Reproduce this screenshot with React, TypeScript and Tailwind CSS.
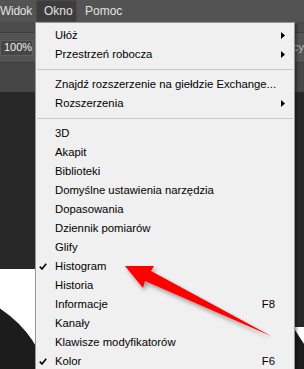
type Item =
  | { kind: "sep" }
  | { kind: "item"; label: string; sub?: boolean; key?: string; checked?: boolean };

const items: Item[] = [
  { kind: "item", label: "Ułóż", sub: true },
  { kind: "item", label: "Przestrzeń robocza", sub: true },
  { kind: "sep" },
  { kind: "item", label: "Znajdź rozszerzenie na giełdzie Exchange..." },
  { kind: "item", label: "Rozszerzenia", sub: true },
  { kind: "sep" },
  { kind: "item", label: "3D" },
  { kind: "item", label: "Akapit" },
  { kind: "item", label: "Biblioteki" },
  { kind: "item", label: "Domyślne ustawienia narzędzia" },
  { kind: "item", label: "Dopasowania" },
  { kind: "item", label: "Dziennik pomiarów" },
  { kind: "item", label: "Glify" },
  { kind: "item", label: "Histogram", checked: true },
  { kind: "item", label: "Historia" },
  { kind: "item", label: "Informacje", key: "F8" },
  { kind: "item", label: "Kanały" },
  { kind: "item", label: "Klawisze modyfikatorów" },
  { kind: "item", label: "Kolor", key: "F6", checked: true },
];

function MenuRow({ item }: { item: Item }) {
  if (item.kind === "sep") {
    return (
      <div className="py-[5px] px-[1px]">
        <div className="h-px bg-[#c8c8c8]"></div>
      </div>
    );
  }
  return (
    <div className="h-[19px] flex items-center pr-[9px] text-black">
      <div className="w-[19px] flex items-center pl-[3px]">
        {item.checked && (
          <svg width="8" height="7" viewBox="0 0 8 7">
            <path d="M0.8 3.6 L3 6 L7.2 0.8" fill="none" stroke="#000" strokeWidth="1.6" />
          </svg>
        )}
      </div>
      <span className="flex-1 whitespace-nowrap">{item.label}</span>
      {item.key && <span className="mr-[10px]">{item.key}</span>}
      {item.sub && (
        <svg width="4" height="7" viewBox="0 0 4 7">
          <polygon points="0,0 4,3.5 0,7" fill="#000" />
        </svg>
      )}
    </div>
  );
}

export default function App() {
  return (
    <div
      className="relative w-[304px] h-[369px] overflow-hidden flex flex-col bg-[#282828]"
      style={{ fontFamily: '"Liberation Sans", Arial, sans-serif' }}
    >
      {/* Menu bar */}
      <div className="h-[22px] bg-[#535353] flex items-stretch text-[12px] text-[#e2e2e2]">
        <div className="flex items-center w-[36px] tracking-[-0.3px]">Widok</div>
        <div className="flex items-center px-[7px] bg-[#3d3d3d] border border-[#4a4a4a] w-[41px]">Okno</div>
        <div className="flex items-center pl-[8px]">Pomoc</div>
      </div>

      {/* Options bar */}
      <div className="h-[11px] bg-[#4b4b4b] border-b border-[#3e3e3e]"></div>
      <div className="h-[29px] bg-[#535353] flex items-center">
        <div className="h-[16px] w-[33px] bg-[#464646] border border-[#5e5e5e] text-[11px] text-[#f0f0f0] flex items-center pl-[3px]">
          100%
        </div>
        <span className="ml-auto mr-[0px] text-[11px] text-[#bdbdbd]">cy</span>
      </div>
      <div className="h-[30px] bg-[#464646] border-t border-[#3c3c3c]"></div>

      {/* Document area */}
      <div className="flex-1 relative">
        <svg width="304" height="277" viewBox="0 0 304 277" className="absolute inset-0">
          <rect x="0" y="177" width="200" height="100" fill="#ffffff" />
          <circle cx="-60" cy="310" r="111" fill="#1c1c1c" />
          <rect x="295" y="235" width="9" height="42" fill="#ffffff" />
          <polygon points="295,238 304,252 304,277 295,277" fill="#1c1c1c" />
        </svg>
      </div>

      {/* Dropdown menu */}
      <div className="absolute left-[35px] top-[22px] w-[260px] h-[360px] bg-[#f0f0f0] border border-[#979797] pt-[3px] text-[11.3px] shadow-[2px_2px_2px_rgba(0,0,0,0.35)]">
        {items.map((it, i) => (
          <MenuRow key={i} item={it} />
        ))}
      </div>

      {/* Red annotation arrow */}
      <svg width="304" height="369" viewBox="0 0 304 369" className="absolute inset-0 pointer-events-none">
        <defs>
          <filter id="sh" x="-20%" y="-20%" width="140%" height="140%">
            <feDropShadow dx="2" dy="3" stdDeviation="2" floodColor="#000" floodOpacity="0.35" />
          </filter>
        </defs>
        <polygon
          points="125,266 154,266 151,271 271,336 145,281 143,288"
          fill="#ff0000"
          filter="url(#sh)"
        />
      </svg>
    </div>
  );
}
